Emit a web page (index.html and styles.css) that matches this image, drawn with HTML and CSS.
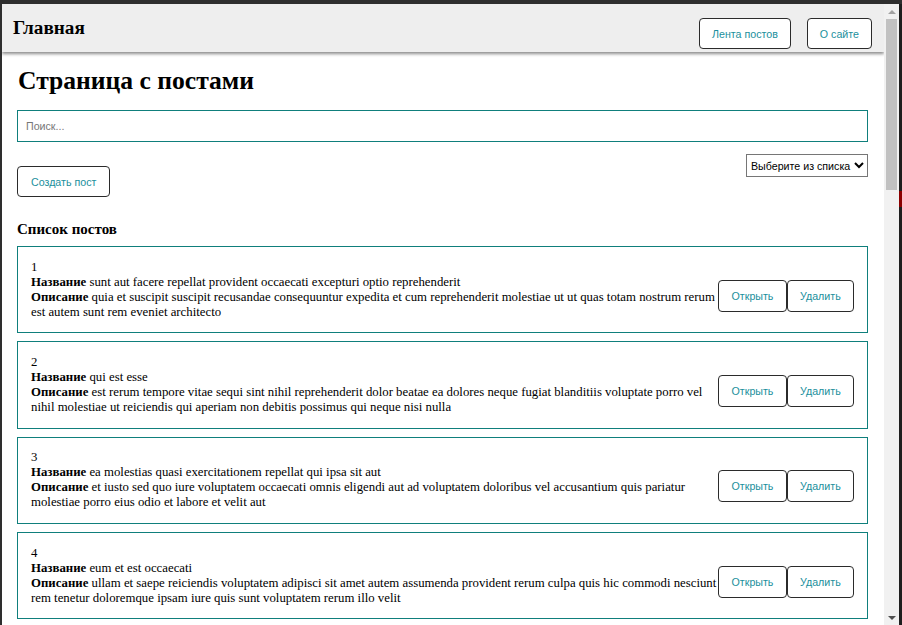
FILE: index.html
```html
<!DOCTYPE html>
<html lang="ru">
<head>
<meta charset="utf-8">
<title>Посты</title>
<link rel="stylesheet" href="styles.css">
</head>
<body>
<div class="shell">
  <div class="frame">
    <div class="viewport">
      <header class="navbar">
        <h2 class="brand">Главная</h2>
        <nav class="nav-links">
          <button class="btn">Лента постов</button>
          <button class="btn">О сайте</button>
        </nav>
      </header>
      <main class="page">
        <h1 class="title">Страница с постами</h1>
        <input class="search" type="text" placeholder="Поиск...">
        <div class="controls">
          <button class="btn create">Создать пост</button>
          <select class="sort">
            <option>Выберите из списка</option>
            <option>По названию</option>
            <option>По описанию</option>
          </select>
        </div>
        <h3 class="list-title">Список постов</h3>
        <div class="posts">
          <div class="post"><div class="post-body"><div>1</div><div><b>Название</b> sunt aut facere repellat provident occaecati excepturi optio reprehenderit</div><div><b>Описание</b> quia et suscipit suscipit recusandae consequuntur expedita et cum reprehenderit molestiae ut ut quas totam nostrum rerum est autem sunt rem eveniet architecto</div></div><div class="post-actions"><button class="btn">Открыть</button><button class="btn">Удалить</button></div></div>
          <div class="post"><div class="post-body"><div>2</div><div><b>Название</b> qui est esse</div><div><b>Описание</b> est rerum tempore vitae sequi sint nihil reprehenderit dolor beatae ea dolores neque fugiat blanditiis voluptate porro vel nihil molestiae ut reiciendis qui aperiam non debitis possimus qui neque nisi nulla</div></div><div class="post-actions"><button class="btn">Открыть</button><button class="btn">Удалить</button></div></div>
          <div class="post"><div class="post-body"><div>3</div><div><b>Название</b> ea molestias quasi exercitationem repellat qui ipsa sit aut</div><div><b>Описание</b> et iusto sed quo iure voluptatem occaecati omnis eligendi aut ad voluptatem doloribus vel accusantium quis pariatur molestiae porro eius odio et labore et velit aut</div></div><div class="post-actions"><button class="btn">Открыть</button><button class="btn">Удалить</button></div></div>
          <div class="post"><div class="post-body"><div>4</div><div><b>Название</b> eum et est occaecati</div><div><b>Описание</b> ullam et saepe reiciendis voluptatem adipisci sit amet autem assumenda provident rerum culpa quis hic commodi nesciunt rem tenetur doloremque ipsam iure quis sunt voluptatem rerum illo velit</div></div><div class="post-actions"><button class="btn">Открыть</button><button class="btn">Удалить</button></div></div>
          <div class="post"><div class="post-body"><div>5</div><div><b>Название</b> nesciunt quas odio</div><div><b>Описание</b> repudiandae veniam quaerat sunt sed alias aut fugiat sit autem sed est voluptatem omnis possimus esse voluptatibus quis est aut tenetur dolor neque</div></div><div class="post-actions"><button class="btn">Открыть</button><button class="btn">Удалить</button></div></div>
          <div class="post"><div class="post-body"><div>6</div><div><b>Название</b> dolorem eum magni eos aperiam quia</div><div><b>Описание</b> ut aspernatur corporis harum nihil quis provident sequi mollitia nobis aliquid molestiae perspiciatis et ea nemo ab reprehenderit accusantium quas voluptate dolores velit et doloremque molestiae</div></div><div class="post-actions"><button class="btn">Открыть</button><button class="btn">Удалить</button></div></div>
        </div>
      </main>
    </div>
    <div class="scrollbar">
      <div class="sb-arrow sb-up"></div>
      <div class="sb-track"><div class="sb-thumb"></div></div>
      <div class="sb-arrow sb-down"></div>
    </div>
  </div>
  <div class="edge"><div class="edge-mark"></div></div>
</div>
</body>
</html>
```

FILE: styles.css
```css
* { box-sizing: border-box; }

html, body {
  margin: 0;
  height: 100%;
  overflow: hidden;
}

body {
  background: #2e2e2e;
  font-family: "Liberation Serif", "Times New Roman", serif;
  font-size: 12.8px;
  color: #000;
}

.shell {
  display: flex;
  height: 625px;
  padding: 4px 0 0 2px;
  background: #2e2e2e;
}

.frame {
  display: flex;
  width: 897px;
  height: 621px;
  background: #fff;
}

.viewport {
  flex: 1;
  min-width: 0;
  overflow: hidden;
}

.scrollbar {
  display: flex;
  flex-direction: column;
  width: 15px;
  background: #f1f1f1;
}

.sb-arrow {
  height: 15px;
  display: flex;
  align-items: center;
  justify-content: center;
}

.sb-up::before,
.sb-down::before {
  content: "";
  width: 0;
  height: 0;
  border-left: 4px solid transparent;
  border-right: 4px solid transparent;
}

.sb-up::before { border-bottom: 4px solid #a3a3a3; }
.sb-down::before { border-top: 4px solid #505050; }

.sb-track {
  flex: 1;
  padding: 0 2px;
}

.sb-thumb {
  height: 171px;
  background: #c1c1c1;
}

.edge {
  flex: 1;
  background: #1e1e1e;
  padding-top: 187px;
}

.edge-mark {
  height: 16px;
  background: #8b0000;
}

.navbar {
  display: flex;
  justify-content: space-between;
  align-items: center;
  height: 48px;
  padding: 0 12px 0 11px;
  background: #eeeeee;
  box-shadow: 0 2px 3px rgba(0, 0, 0, 0.45);
}

.brand {
  margin: 0;
  font-size: 19.2px;
  font-weight: bold;
}

.nav-links {
  display: flex;
  gap: 16px;
  align-self: flex-end;
  margin-bottom: 3px;
}

.btn {
  height: 31px;
  padding: 0 12px;
  background: #fff;
  border: 1px solid #2b2b2b;
  border-radius: 4px;
  color: #1a8f9c;
  font-family: "Liberation Sans", Arial, sans-serif;
  font-size: 10.67px;
  cursor: pointer;
}

.page {
  padding: 0 16px 20px 15px;
}

.title {
  margin: 14px 0 14px 1px;
  font-size: 25.6px;
  font-weight: bold;
}

.search {
  display: block;
  width: 100%;
  height: 32px;
  padding: 0 8px;
  border: 1px solid #0f7f7c;
  font-family: "Liberation Sans", Arial, sans-serif;
  font-size: 10.67px;
  outline: none;
}

.search::placeholder {
  color: #777;
}

.controls {
  display: flex;
  justify-content: space-between;
  align-items: flex-start;
  margin-top: 12px;
}

.create {
  margin-top: 12px;
  padding: 0 13px;
}

.sort {
  height: 23px;
  border: 1px solid #767676;
  border-radius: 0;
  background: #fff;
  font-family: "Liberation Sans", Arial, sans-serif;
  font-size: 10.67px;
  color: #000;
}

.list-title {
  margin: 24px 0 8px;
  font-size: 15px;
  font-weight: bold;
}

.posts {
  display: flex;
  flex-direction: column;
  gap: 8px;
}

.post {
  display: flex;
  align-items: center;
  padding: 12.67px 13px;
  border: 1px solid #0f7f7c;
  line-height: 15px;
}

.post-body {
  flex: 1;
}

.post-actions {
  display: flex;
  margin-top: 12px;
}

.post-actions .btn {
  height: 32px;
  padding: 0 12.3px;
}
```
